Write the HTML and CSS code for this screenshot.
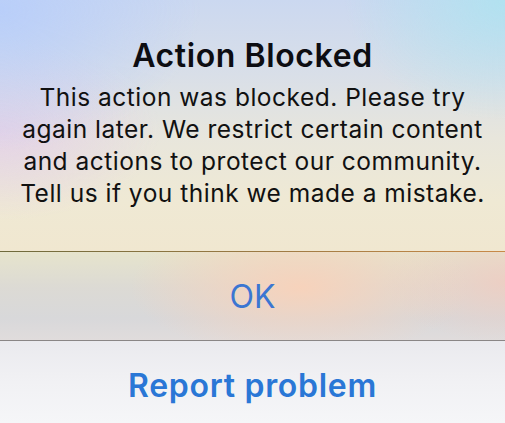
FILE: index.html
```html
<!DOCTYPE html>
<html>
<head>
<meta charset="utf-8">
<link rel="stylesheet" href="styles.css">
</head>
<body>
<div class="alert">
  <div class="message">
    <h1 class="title">Action Blocked</h1>
    <p class="text">This action was blocked. Please try<br>again later. We restrict certain content<br>and actions to protect our community.<br>Tell us if you think we made a mistake.</p>
  </div>
  <div class="action ok">OK</div>
  <div class="action report">Report problem</div>
</div>
</body>
</html>
```
FILE: styles.css
```css
html, body {
  margin: 0;
  padding: 0;
}
body {
  width: 505px;
  height: 423px;
  overflow: hidden;
  font-family: "Inter", "Liberation Sans", sans-serif;
}
.alert {
  display: flex;
  flex-direction: column;
  height: 423px;
}
.message {
  height: 251px;
  display: flex;
  flex-direction: column;
  align-items: center;
  text-align: center;
  border-bottom: 1px solid #8c7a4c;
  border-image: linear-gradient(90deg, #6e6a3c 0%, #9a7a44 50%, #c98a48 100%) 1;
  background:
    radial-gradient(ellipse 200px 140px at 0px 10px, rgba(184,206,250,0.95), rgba(184,206,250,0) 100%),
    radial-gradient(ellipse 160px 120px at 505px 0px, rgba(176,226,240,0.95), rgba(176,226,240,0) 100%),
    radial-gradient(ellipse 160px 90px at 0px 130px, rgba(228,208,232,0.9), rgba(228,208,232,0) 100%),
    linear-gradient(180deg, #cbd8f0 0%, #d9dfe8 30%, #e8e6dc 55%, #efe9d4 80%, #f0e7d0 100%);
}
.title {
  margin: 37px 0 0;
  font-size: 32px;
  font-weight: 600;
  line-height: 38px;
  color: #0d0d12;
  letter-spacing: 0.6px;
}
.text {
  margin: 6px 0 0;
  font-size: 24.5px;
  line-height: 32px;
  color: #111;
  letter-spacing: 0.5px;
  white-space: nowrap;
}
.action {
  display: flex;
  align-items: center;
  justify-content: center;
}
.ok {
  height: 88px;
  font-size: 32px;
  color: #3b76d2;
  border-bottom: 1px solid #8a8686;
  background:
    radial-gradient(ellipse 170px 70px at 300px 35px, rgba(248,210,186,0.95), rgba(248,210,186,0) 100%),
    radial-gradient(ellipse 120px 60px at 505px 30px, rgba(240,204,192,0.8), rgba(240,204,192,0) 100%),
    linear-gradient(180deg, #e6e4cc 0%, #dcdad4 40%, #d8d8da 75%, #e0dcdc 100%);
}
.report {
  flex: 1;
  font-size: 32px;
  font-weight: 600;
  color: #2a77d6;
  letter-spacing: 0.7px;
  padding-top: 6px;
  background: linear-gradient(180deg, #eaeaee 0%, #f1f1f4 50%, #f5f6f8 100%);
}
```
